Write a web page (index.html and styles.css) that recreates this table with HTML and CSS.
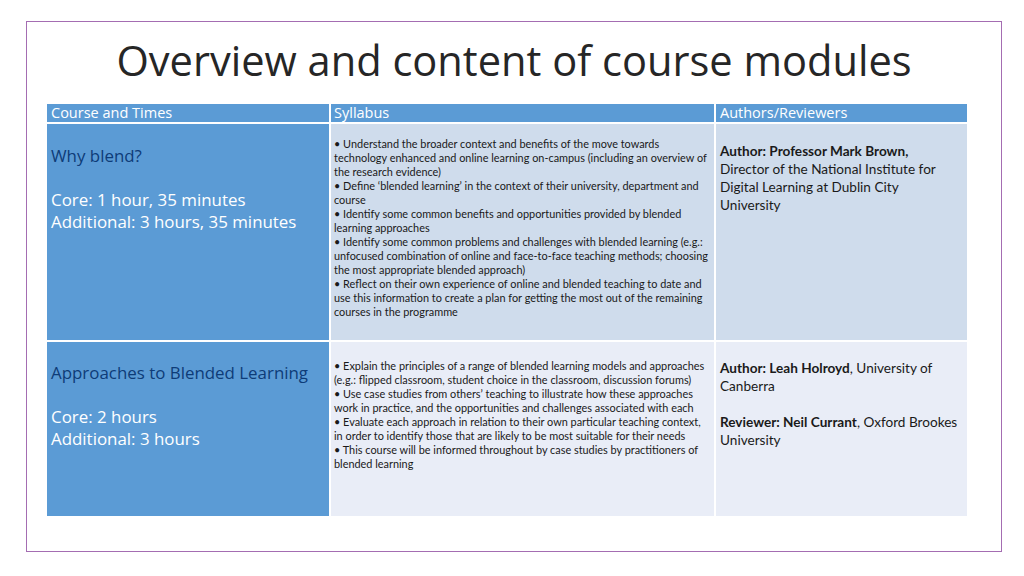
FILE: index.html
```html
<!DOCTYPE html>
<html>
<head>
<meta charset="utf-8">
<link rel="stylesheet" href="styles.css">
</head>
<body>
<div class="slide">
  <h1 class="title">Overview and content of course modules</h1>
  <div class="table">
    <div class="th th1">Course and Times</div>
    <div class="th th2">Syllabus</div>
    <div class="th th3">Authors/Reviewers</div>

    <div class="c1 r1">
      <div class="course">Why blend?</div>
      <div class="blank"></div>
      <div>Core: 1 hour, 35 minutes</div>
      <div>Additional: 3 hours, 35 minutes</div>
    </div>
    <div class="c2 r1 light">
      <div class="syl">• Understand the broader context and benefits of the move towards<br>technology enhanced and online learning on-campus (including an overview of<br>the research evidence)<br>• Define ‘blended learning’ in the context of their university, department and<br>course<br>• Identify some common benefits and opportunities provided by blended<br>learning approaches<br>• Identify some common problems and challenges with blended learning (e.g.:<br>unfocused combination of online and face-to-face teaching methods; choosing<br>the most appropriate blended approach)<br>• Reflect on their own experience of online and blended teaching to date and<br>use this information to create a plan for getting the most out of the remaining<br>courses in the programme</div>
    </div>
    <div class="c3 r1 light">
      <div class="auth"><b>Author: Professor Mark Brown,</b><br>Director of the National Institute for<br>Digital Learning at Dublin City<br>University</div>
    </div>

    <div class="c1 r2">
      <div class="course">Approaches to Blended Learning</div>
      <div class="blank"></div>
      <div>Core: 2 hours</div>
      <div>Additional: 3 hours</div>
    </div>
    <div class="c2 r2 pale">
      <div class="syl">• Explain the principles of a range of blended learning models and approaches<br>(e.g.: flipped classroom, student choice in the classroom, discussion forums)<br>• Use case studies from others’ teaching to illustrate how these approaches<br>work in practice, and the opportunities and challenges associated with each<br>• Evaluate each approach in relation to their own particular teaching context,<br>in order to identify those that are likely to be most suitable for their needs<br>• This course will be informed throughout by case studies by practitioners of<br>blended learning</div>
    </div>
    <div class="c3 r2 pale">
      <div class="auth"><b>Author: Leah Holroyd</b>, University of<br>Canberra<br><br><b>Reviewer: Neil Currant</b>, Oxford Brookes<br>University</div>
    </div>
  </div>
</div>
</body>
</html>
```

FILE: styles.css
```css
html, body {
  margin: 0;
  padding: 0;
  background: #ffffff;
}
body {
  width: 1024px;
  height: 576px;
  overflow: hidden;
}
.slide {
  margin: 21px 0 0 26px;
  width: 974px;
  height: 529px;
  border: 1px solid #a46db2;
  box-sizing: content-box;
}
.title {
  margin: 0;
  padding-top: 12px;
  height: 70px;
  text-align: center;
  font-family: "Open Sans", sans-serif;
  font-weight: 400;
  font-size: 41.6px;
  line-height: 52px;
  color: #262626;
}
.table {
  margin: 0 0 0 20px;
  width: 920px;
  display: grid;
  grid-template-columns: 282px 383px 251px;
  grid-template-rows: 18px 216px 174px;
  column-gap: 2px;
  row-gap: 2px;
  background: #ffffff;
}
.th {
  background: #5b9bd5;
  color: #ffffff;
  font-family: "Open Sans", sans-serif;
  font-size: 14.5px;
  line-height: 18px;
  white-space: nowrap;
}
.th1 { padding-left: 4px; }
.th2 { padding-left: 3px; }
.th3 { padding-left: 4px; }
.c1 {
  background: #5b9bd5;
  color: #ffffff;
  font-family: "Open Sans", sans-serif;
  font-size: 16.9px;
  line-height: 22px;
  padding-left: 4px;
  white-space: nowrap;
}
.c1.r1 { padding-top: 21px; }
.c1.r2 { padding-top: 20px; }
.course { color: #0e3c78; }
.blank { height: 22px; }
.light { background: #cfdcec; }
.pale { background: #e9edf7; }
.syl {
  font-family: "Lato", sans-serif;
  font-size: 10.9px;
  line-height: 14px;
  color: #1a1a1a;
  padding-left: 3px;
  white-space: nowrap;
}
.c2.r1 { padding-top: 13px; }
.c2.r2 { padding-top: 17px; }
.auth {
  font-family: "Lato", sans-serif;
  font-size: 13.6px;
  line-height: 18px;
  color: #1a1a1a;
  padding-left: 4px;
  white-space: nowrap;
}
.c3.r1 { padding-top: 18px; }
.c3.r2 { padding-top: 17px; }
```
